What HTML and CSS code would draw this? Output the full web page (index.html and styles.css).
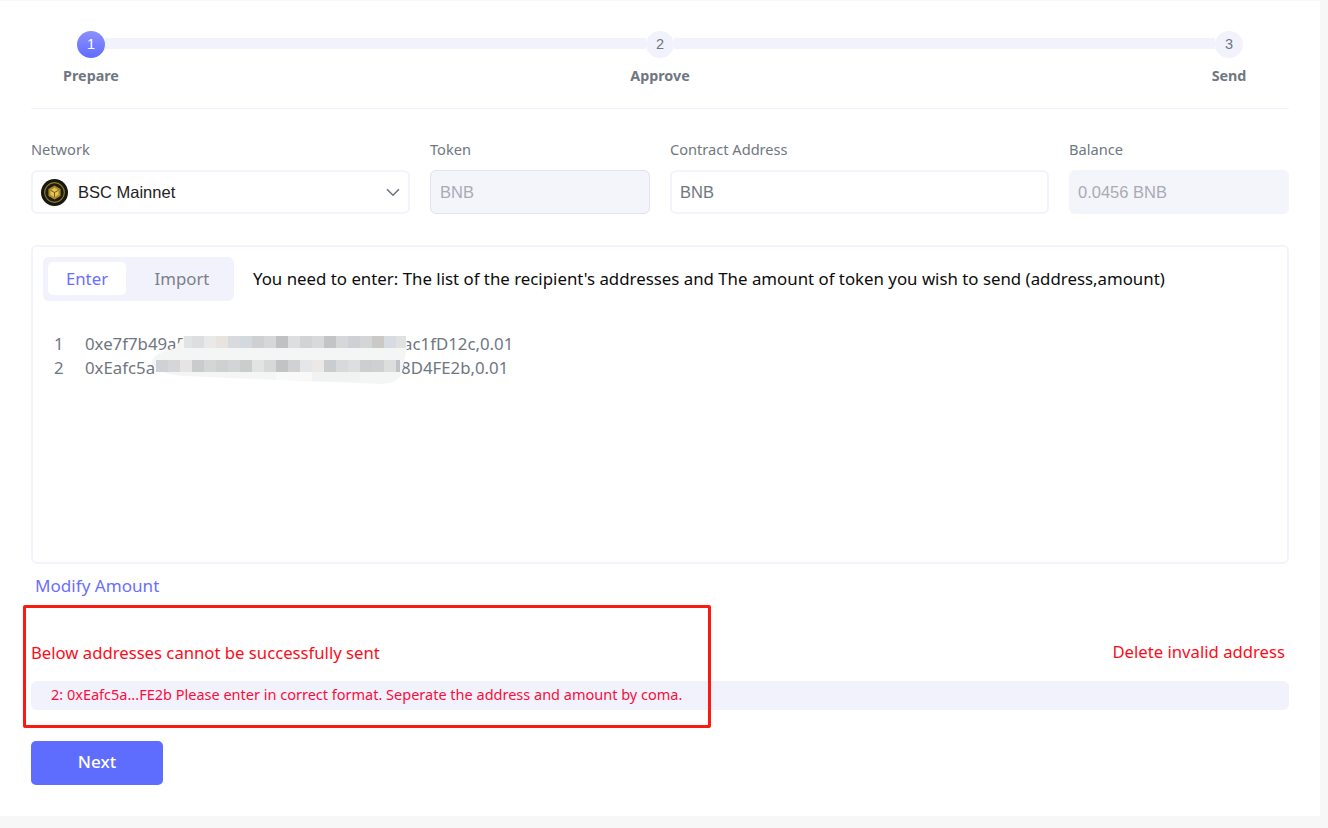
FILE: index.html
```html
<!DOCTYPE html>
<html lang="en">
<head>
<meta charset="utf-8">
<title>Multisender</title>
<link rel="stylesheet" href="styles.css">
</head>
<body>
<main class="panel">
  <section class="stepper">
    <div class="track">
      <span class="dot dot-active">1</span><span class="bar"></span>
      <span class="dot">2</span><span class="bar"></span>
      <span class="dot">3</span>
    </div>
    <div class="step-labels">
      <span>Prepare</span><span>Approve</span><span>Send</span>
    </div>
  </section>

  <section class="fields">
    <div class="field">
      <label class="label">Network</label>
      <div class="box select">
        <svg class="logo" viewBox="0 0 28 28" width="27" height="27" aria-hidden="true">
          <circle cx="14" cy="14" r="14" fill="#17170f"/>
          <circle cx="14" cy="14" r="10.2" fill="#1f1d12" stroke="#8f7a32" stroke-width="1.2"/>
          <path d="M14 6.8l6.3 3.6v7.2L14 21.2l-6.3-3.6v-7.2z" fill="#a98a2a"/>
          <path d="M14 9.2l4.2 2.4v4.8L14 18.8l-4.2-2.4v-4.8z" fill="#e8c350"/>
          <path d="M14 14l4.2-2.4M14 14v4.8M14 14l-4.2-2.4" stroke="#6b5518" stroke-width="1" fill="none"/>
        </svg>
        <span class="select-text">BSC Mainnet</span>
        <svg class="chev" viewBox="0 0 14 9" width="14" height="9" aria-hidden="true">
          <path d="M1 1.2l6 6 6-6" fill="none" stroke="#6d7680" stroke-width="1.6"/>
        </svg>
      </div>
    </div>
    <div class="field">
      <label class="label">Token</label>
      <div class="box disabled bordered">BNB</div>
    </div>
    <div class="field">
      <label class="label">Contract Address</label>
      <div class="box editable">BNB</div>
    </div>
    <div class="field">
      <label class="label">Balance</label>
      <div class="box disabled">0.0456 BNB</div>
    </div>
  </section>

  <section class="editor">
    <div class="editor-head">
      <div class="tabs">
        <span class="tab tab-active">Enter</span>
        <span class="tab tab-wide">Import</span>
      </div>
      <p class="hint">You need to enter: The list of the recipient's addresses and The amount of token you wish to send (address,amount)</p>
    </div>
    <div class="lines">
      <div class="line"><span class="num">1</span><span class="addr">0xe7f7b49a5<span class="gap-a"></span>ac1fD12c,0.01</span></div>
      <div class="line"><span class="num">2</span><span class="addr">0xEafc5a<span class="gap-b"></span>8D4FE2b,0.01</span></div>
    </div>
    <svg class="smudge" viewBox="0 0 260 50" width="260" height="50" aria-hidden="true">
      <path d="M38 0H252Q258 2 257 12L252 36Q250 47 232 48Q130 44 34 40Q8 38 2 28Q-1 18 26 12Q30 2 38 0z" fill="#f4f5f5"/>
      <rect x="34" y="0" width="8" height="12" fill="#e2e3e5"/>
      <rect x="42" y="0" width="12" height="12" fill="#dcdee0"/>
      <rect x="54" y="0" width="12" height="12" fill="#e9e9ea"/>
      <rect x="66" y="0" width="12" height="12" fill="#e8e3df"/>
      <rect x="78" y="0" width="12" height="12" fill="#d8dadd"/>
      <rect x="90" y="0" width="12" height="12" fill="#d4d9de"/>
      <rect x="102" y="0" width="12" height="12" fill="#cfd0d2"/>
      <rect x="114" y="0" width="12" height="12" fill="#d6d7d8"/>
      <rect x="126" y="0" width="12" height="12" fill="#c0c1c3"/>
      <rect x="138" y="0" width="12" height="12" fill="#dcdee0"/>
      <rect x="150" y="0" width="12" height="12" fill="#d2d3d5"/>
      <rect x="162" y="0" width="12" height="12" fill="#d8d9da"/>
      <rect x="174" y="0" width="12" height="12" fill="#c3c4c6"/>
      <rect x="186" y="0" width="12" height="12" fill="#d6d7d8"/>
      <rect x="198" y="0" width="12" height="12" fill="#cfd0d5"/>
      <rect x="210" y="0" width="12" height="12" fill="#d4d5d7"/>
      <rect x="222" y="0" width="12" height="12" fill="#cac9c8"/>
      <rect x="234" y="0" width="12" height="12" fill="#d6dce1"/>
      <rect x="246" y="0" width="10" height="12" fill="#e0e1e3"/>
      <rect x="6" y="24" width="12" height="12" fill="#d0d1d4"/>
      <rect x="18" y="24" width="12" height="12" fill="#d5d6d8"/>
      <rect x="30" y="24" width="12" height="12" fill="#e6e4e4"/>
      <rect x="42" y="24" width="12" height="12" fill="#cacbcc"/>
      <rect x="54" y="24" width="12" height="12" fill="#d4d5d5"/>
      <rect x="66" y="24" width="12" height="12" fill="#cfd0d2"/>
      <rect x="78" y="24" width="12" height="12" fill="#d3d4d5"/>
      <rect x="90" y="24" width="12" height="12" fill="#cbcccc"/>
      <rect x="102" y="24" width="12" height="12" fill="#e2e3e3"/>
      <rect x="114" y="24" width="12" height="12" fill="#d7d8d8"/>
      <rect x="126" y="24" width="12" height="12" fill="#c2c3c5"/>
      <rect x="138" y="24" width="12" height="12" fill="#d0d1d2"/>
      <rect x="150" y="24" width="12" height="12" fill="#e4e6e8"/>
      <rect x="162" y="24" width="12" height="12" fill="#ebe8e6"/>
      <rect x="174" y="24" width="12" height="12" fill="#cbccd0"/>
      <rect x="186" y="24" width="12" height="12" fill="#d8d9db"/>
      <rect x="198" y="24" width="12" height="12" fill="#dddee0"/>
      <rect x="210" y="24" width="12" height="12" fill="#cdced0"/>
      <rect x="222" y="24" width="12" height="12" fill="#cfd0d1"/>
      <rect x="234" y="24" width="12" height="12" fill="#dcdddd"/>
      <rect x="246" y="24" width="4" height="12" fill="#bfc2c7"/>
      <rect x="126" y="36" width="36" height="8" fill="#f9f9f9"/>
      <rect x="162" y="36" width="48" height="9" fill="#f1f2f2"/>
    </svg>
  </section>

  <a class="modify">Modify Amount</a>

  <section class="errors">
    <div class="error-head">
      <span>Below addresses cannot be successfully sent</span>
      <span class="delete">Delete invalid address</span>
    </div>
    <div class="error-row">2: 0xEafc5a...FE2b Please enter in correct format. Seperate the address and amount by coma.</div>
  </section>

  <button class="next" type="button">Next</button>

  <div class="annotation"></div>
</main>
</body>
</html>
```
FILE: styles.css
```css
* { box-sizing: border-box; }

html, body { height: 100%; }

body {
  margin: 0;
  background: #f7f7f7;
  padding-top: 1px;
  overflow: hidden;
  font-family: "Noto Sans", "Open Sans", sans-serif;
}

.panel {
  position: relative;
  width: 1320px;
  height: 815px;
  background: #fff;
  padding: 30px 31px 0;
}

.stepper {
  height: 78px;
  border-bottom: 1px solid #f3f3fd;
}

.track {
  display: flex;
  align-items: center;
  padding: 0 46px;
}

.dot {
  flex: none;
  width: 28px;
  height: 27px;
  border-radius: 50%;
  background: #f2f2fd;
  color: #6f7781;
  font-family: "Liberation Sans", Arial, sans-serif;
  font-size: 14.5px;
  line-height: 27px;
  text-align: center;
}

.dot-active {
  background: linear-gradient(180deg, #8c90ff 0%, #5f6dff 100%);
  color: #fff;
}

.bar {
  flex: 1;
  height: 11px;
  margin-top: -2px;
  background: #f2f2fd;
}

.step-labels {
  display: flex;
  justify-content: space-between;
  padding: 7px 5px 0;
}

.step-labels span {
  width: 110px;
  text-align: center;
  font-size: 14.3px;
  font-weight: 700;
  line-height: 22px;
  color: #6f7781;
}

.fields {
  display: flex;
  gap: 20px;
  margin-top: 29px;
}

.field:nth-child(1) { width: 379px; }
.field:nth-child(2) { width: 220px; }
.field:nth-child(3) { width: 379px; }
.field:nth-child(4) { width: 220px; }

.label {
  display: block;
  height: 22px;
  margin-bottom: 10px;
  font-size: 14.6px;
  line-height: 22px;
  color: #6f7781;
}

.box {
  display: flex;
  align-items: center;
  height: 44px;
  padding: 0 9px;
  border-radius: 6px;
  font-family: "Liberation Sans", Arial, sans-serif;
  font-size: 16.5px;
}

.select {
  border: 2px solid #f3f3fd;
  color: #222;
  padding: 0 8px;
}

.logo { flex: none; }

.select-text {
  flex: 1;
  margin-left: 10px;
  padding-top: 1px;
}

.chev { margin: 1px 0 0; }

.disabled {
  background: #f4f5fb;
  color: #a9abb4;
}

.bordered { border: 1px solid #e3e4ec; }

.editable {
  border: 2px solid #f3f3fd;
  color: #6f7781;
  padding: 0 8px;
}

.editor {
  position: relative;
  height: 319px;
  margin-top: 31px;
  padding: 10px 10px 0;
  border: 2px solid #f3f3fd;
  border-radius: 6px;
}

.editor-head {
  display: flex;
  align-items: center;
}

.tabs {
  display: flex;
  gap: 9px;
  width: 191px;
  height: 44px;
  padding: 5px;
  border-radius: 6px;
  background: #f2f2fd;
}

.tab {
  width: 78px;
  height: 33px;
  border-radius: 5px;
  font-size: 16.8px;
  line-height: 34px;
  text-align: center;
  color: #7a8088;
}

.tab-wide { width: 94px; }

.tab-active {
  background: #fff;
  color: #6a6fff;
}

.hint {
  margin: 0 0 0 19px;
  font-size: 16.84px;
  line-height: 24px;
  color: #0c0c0c;
  white-space: nowrap;
}

.lines { margin-top: 31px; padding-left: 11px; }

.line {
  display: flex;
  height: 24px;
  font-size: 16.8px;
  line-height: 24px;
  color: #6f7781;
}

.num { width: 31px; }

.addr { display: flex; white-space: nowrap; }

.gap-a { width: 217px; }
.gap-b { width: 246px; }

.smudge {
  position: absolute;
  left: 117px;
  top: 89px;
}

.modify {
  display: block;
  margin: 10px 0 0 4px;
  font-size: 17.1px;
  line-height: 24px;
  color: #6a6fff;
}

.errors { margin-top: 42px; }

.error-head {
  display: flex;
  justify-content: space-between;
  align-items: flex-end;
  padding-right: 4px;
  font-size: 16.7px;
  line-height: 24px;
  color: #fc0d1b;
}

.delete { margin-bottom: 1px; }

.error-row {
  height: 29px;
  margin-top: 16px;
  padding-left: 20px;
  border-radius: 6px;
  background: #f2f2fd;
  font-size: 14.5px;
  line-height: 26px;
  color: #fc0d3b;
}

.next {
  display: block;
  width: 132px;
  height: 44px;
  margin-top: 31px;
  padding: 0 0 4px;
  border: 0;
  border-radius: 5px;
  background: #5f6dff;
  color: #fff;
  font-family: inherit;
  font-size: 17px;
  font-weight: 500;
}

.annotation {
  position: absolute;
  left: 23px;
  top: 604px;
  width: 688px;
  height: 123px;
  border: 3px solid #fb1a12;
  border-radius: 2px;
  pointer-events: none;
}
```
